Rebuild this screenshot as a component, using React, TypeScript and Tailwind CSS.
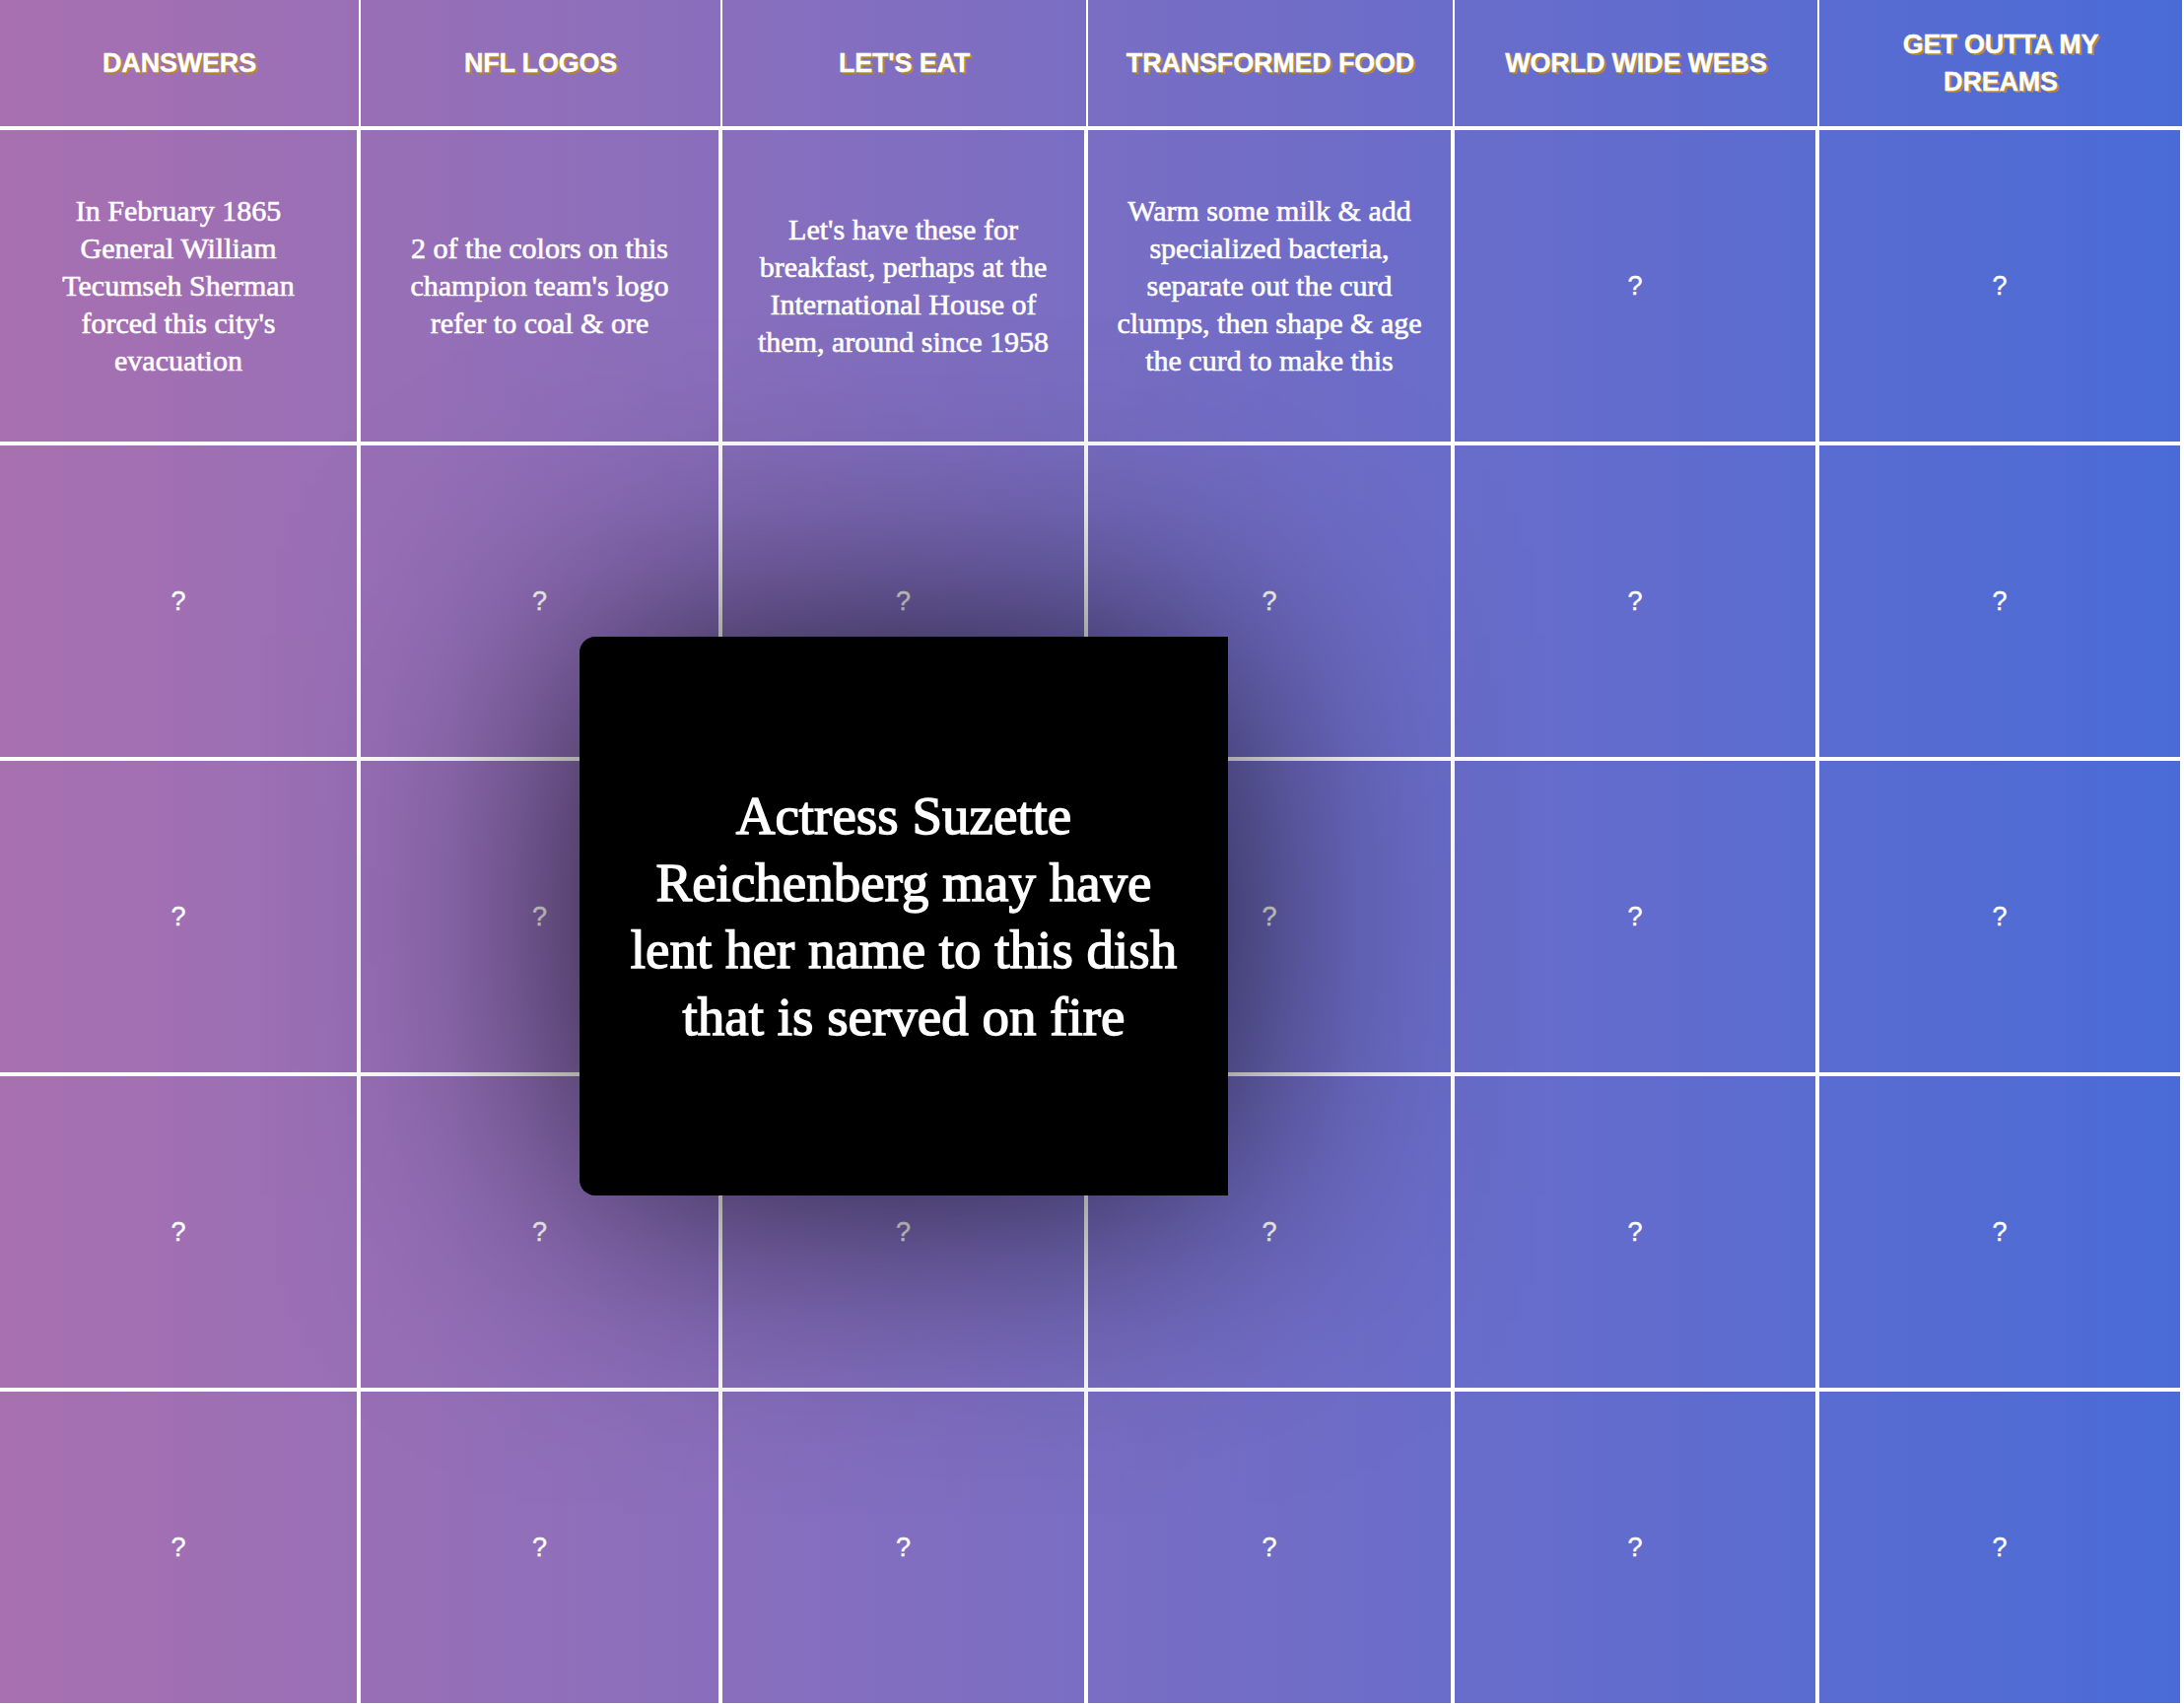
const CATEGORIES = [
  "DANSWERS",
  "NFL LOGOS",
  "LET'S EAT",
  "TRANSFORMED FOOD",
  "WORLD WIDE WEBS",
  "GET OUTTA MY\nDREAMS",
];

// revealed clues, one array of lines per cell; null = still hidden
const FIRST_ROW: (string[] | null)[] = [
  ["In February 1865", "General William", "Tecumseh Sherman", "forced this city's", "evacuation"],
  ["2 of the colors on this", "champion team's logo", "refer to coal & ore"],
  ["Let's have these for", "breakfast, perhaps at the", "International House of", "them, around since 1958"],
  ["Warm some milk & add", "specialized bacteria,", "separate out the curd", "clumps, then shape & age", "the curd to make this"],
  null,
  null,
];

const HIDDEN_ROWS = 4;

const ACTIVE_CLUE = [
  "Actress Suzette",
  "Reichenberg may have",
  "lent her name to this dish",
  "that is served on fire",
];

function HeaderCell({ title }: { title: string }) {
  return (
    <div className="flex items-center justify-center whitespace-pre-line border-b-4 border-r-2 border-white px-4 text-center font-['Liberation_Sans',Arial,sans-serif] text-[27px] font-bold leading-[38px] tracking-[-0.2px] text-white [-webkit-text-stroke:0.4px_white] [text-shadow:1px_1px_0_#b5862a,2px_2px_0_#b5862a]">
      {title}
    </div>
  );
}

function ClueCell({ lines }: { lines: string[] | null }) {
  return (
    <div className="flex items-center justify-center border-b-4 border-r-4 border-white text-center text-white">
      {lines ? (
        <div className="font-['Liberation_Serif','Times_New_Roman',serif] text-[30px] leading-[38px] [-webkit-text-stroke:0.6px_white]">
          {lines.map((l, i) => (
            <div key={i} className="whitespace-nowrap">
              {l}
            </div>
          ))}
        </div>
      ) : (
        <span className="font-['Liberation_Sans',Arial,sans-serif] text-[27px] leading-none [-webkit-text-stroke:0.4px_white]">?</span>
      )}
    </div>
  );
}

export default function App() {
  return (
    <div className="relative h-[1732px] w-[2216px] overflow-hidden bg-[linear-gradient(to_right,#a870b0,#4a6bd7)]">
      <div className="grid grid-cols-[366px_367px_371px_372px_370px_370px] grid-rows-[132px_repeat(5,320px)]">
        {CATEGORIES.map((c) => (
          <HeaderCell key={c} title={c} />
        ))}
        {FIRST_ROW.map((lines, i) => (
          <ClueCell key={`r0-${i}`} lines={lines} />
        ))}
        {Array.from({ length: HIDDEN_ROWS }).flatMap((_, r) =>
          CATEGORIES.map((_, c) => <ClueCell key={`r${r + 1}-${c}`} lines={null} />)
        )}
      </div>

      {/* soft shadow around the open clue: horizontal falloff times vertical mask */}
      <div className="pointer-events-none absolute left-[258px] top-[316px] h-[1227px] w-[1318px] bg-[linear-gradient(to_right,rgba(0,0,0,0)_0%,rgba(0,0,0,0.018)_5.3%,rgba(0,0,0,0.054)_10.2%,rgba(0,0,0,0.127)_15.2%,rgba(0,0,0,0.247)_20.1%,rgba(0,0,0,0.4)_25%,rgba(0,0,0,0.553)_30%,rgba(0,0,0,0.673)_34.9%,rgba(0,0,0,0.746)_39.8%,rgba(0,0,0,0.782)_44.8%,rgba(0,0,0,0.8)_50%,rgba(0,0,0,0.782)_55.2%,rgba(0,0,0,0.746)_60.2%,rgba(0,0,0,0.673)_65.1%,rgba(0,0,0,0.553)_70%,rgba(0,0,0,0.4)_75%,rgba(0,0,0,0.247)_79.9%,rgba(0,0,0,0.127)_84.8%,rgba(0,0,0,0.054)_89.8%,rgba(0,0,0,0.018)_94.7%,rgba(0,0,0,0)_100%)] [mask-image:linear-gradient(to_bottom,rgba(0,0,0,0)_0%,rgba(0,0,0,0.023)_5.7%,rgba(0,0,0,0.067)_11%,rgba(0,0,0,0.159)_16.3%,rgba(0,0,0,0.309)_21.6%,rgba(0,0,0,0.5)_26.9%,rgba(0,0,0,0.691)_32.2%,rgba(0,0,0,0.841)_37.5%,rgba(0,0,0,0.933)_42.8%,rgba(0,0,0,0.977)_48.1%,rgba(0,0,0,0.977)_51.9%,rgba(0,0,0,0.933)_57.2%,rgba(0,0,0,0.841)_62.5%,rgba(0,0,0,0.691)_67.8%,rgba(0,0,0,0.5)_73.1%,rgba(0,0,0,0.309)_78.4%,rgba(0,0,0,0.159)_83.7%,rgba(0,0,0,0.067)_89%,rgba(0,0,0,0.023)_94.3%,rgba(0,0,0,0)_100%)]" />

      {/* open clue */}
      <div className="absolute left-[588px] top-[646px] flex h-[567px] w-[658px] items-center justify-center rounded-l-2xl bg-black text-center text-white">
        <div className="font-['Liberation_Serif','Times_New_Roman',serif] text-[55px] leading-[68px] [-webkit-text-stroke:1.4px_white]">
          {ACTIVE_CLUE.map((l, i) => (
            <div key={i} className="whitespace-nowrap">
              {l}
            </div>
          ))}
        </div>
      </div>
    </div>
  );
}
